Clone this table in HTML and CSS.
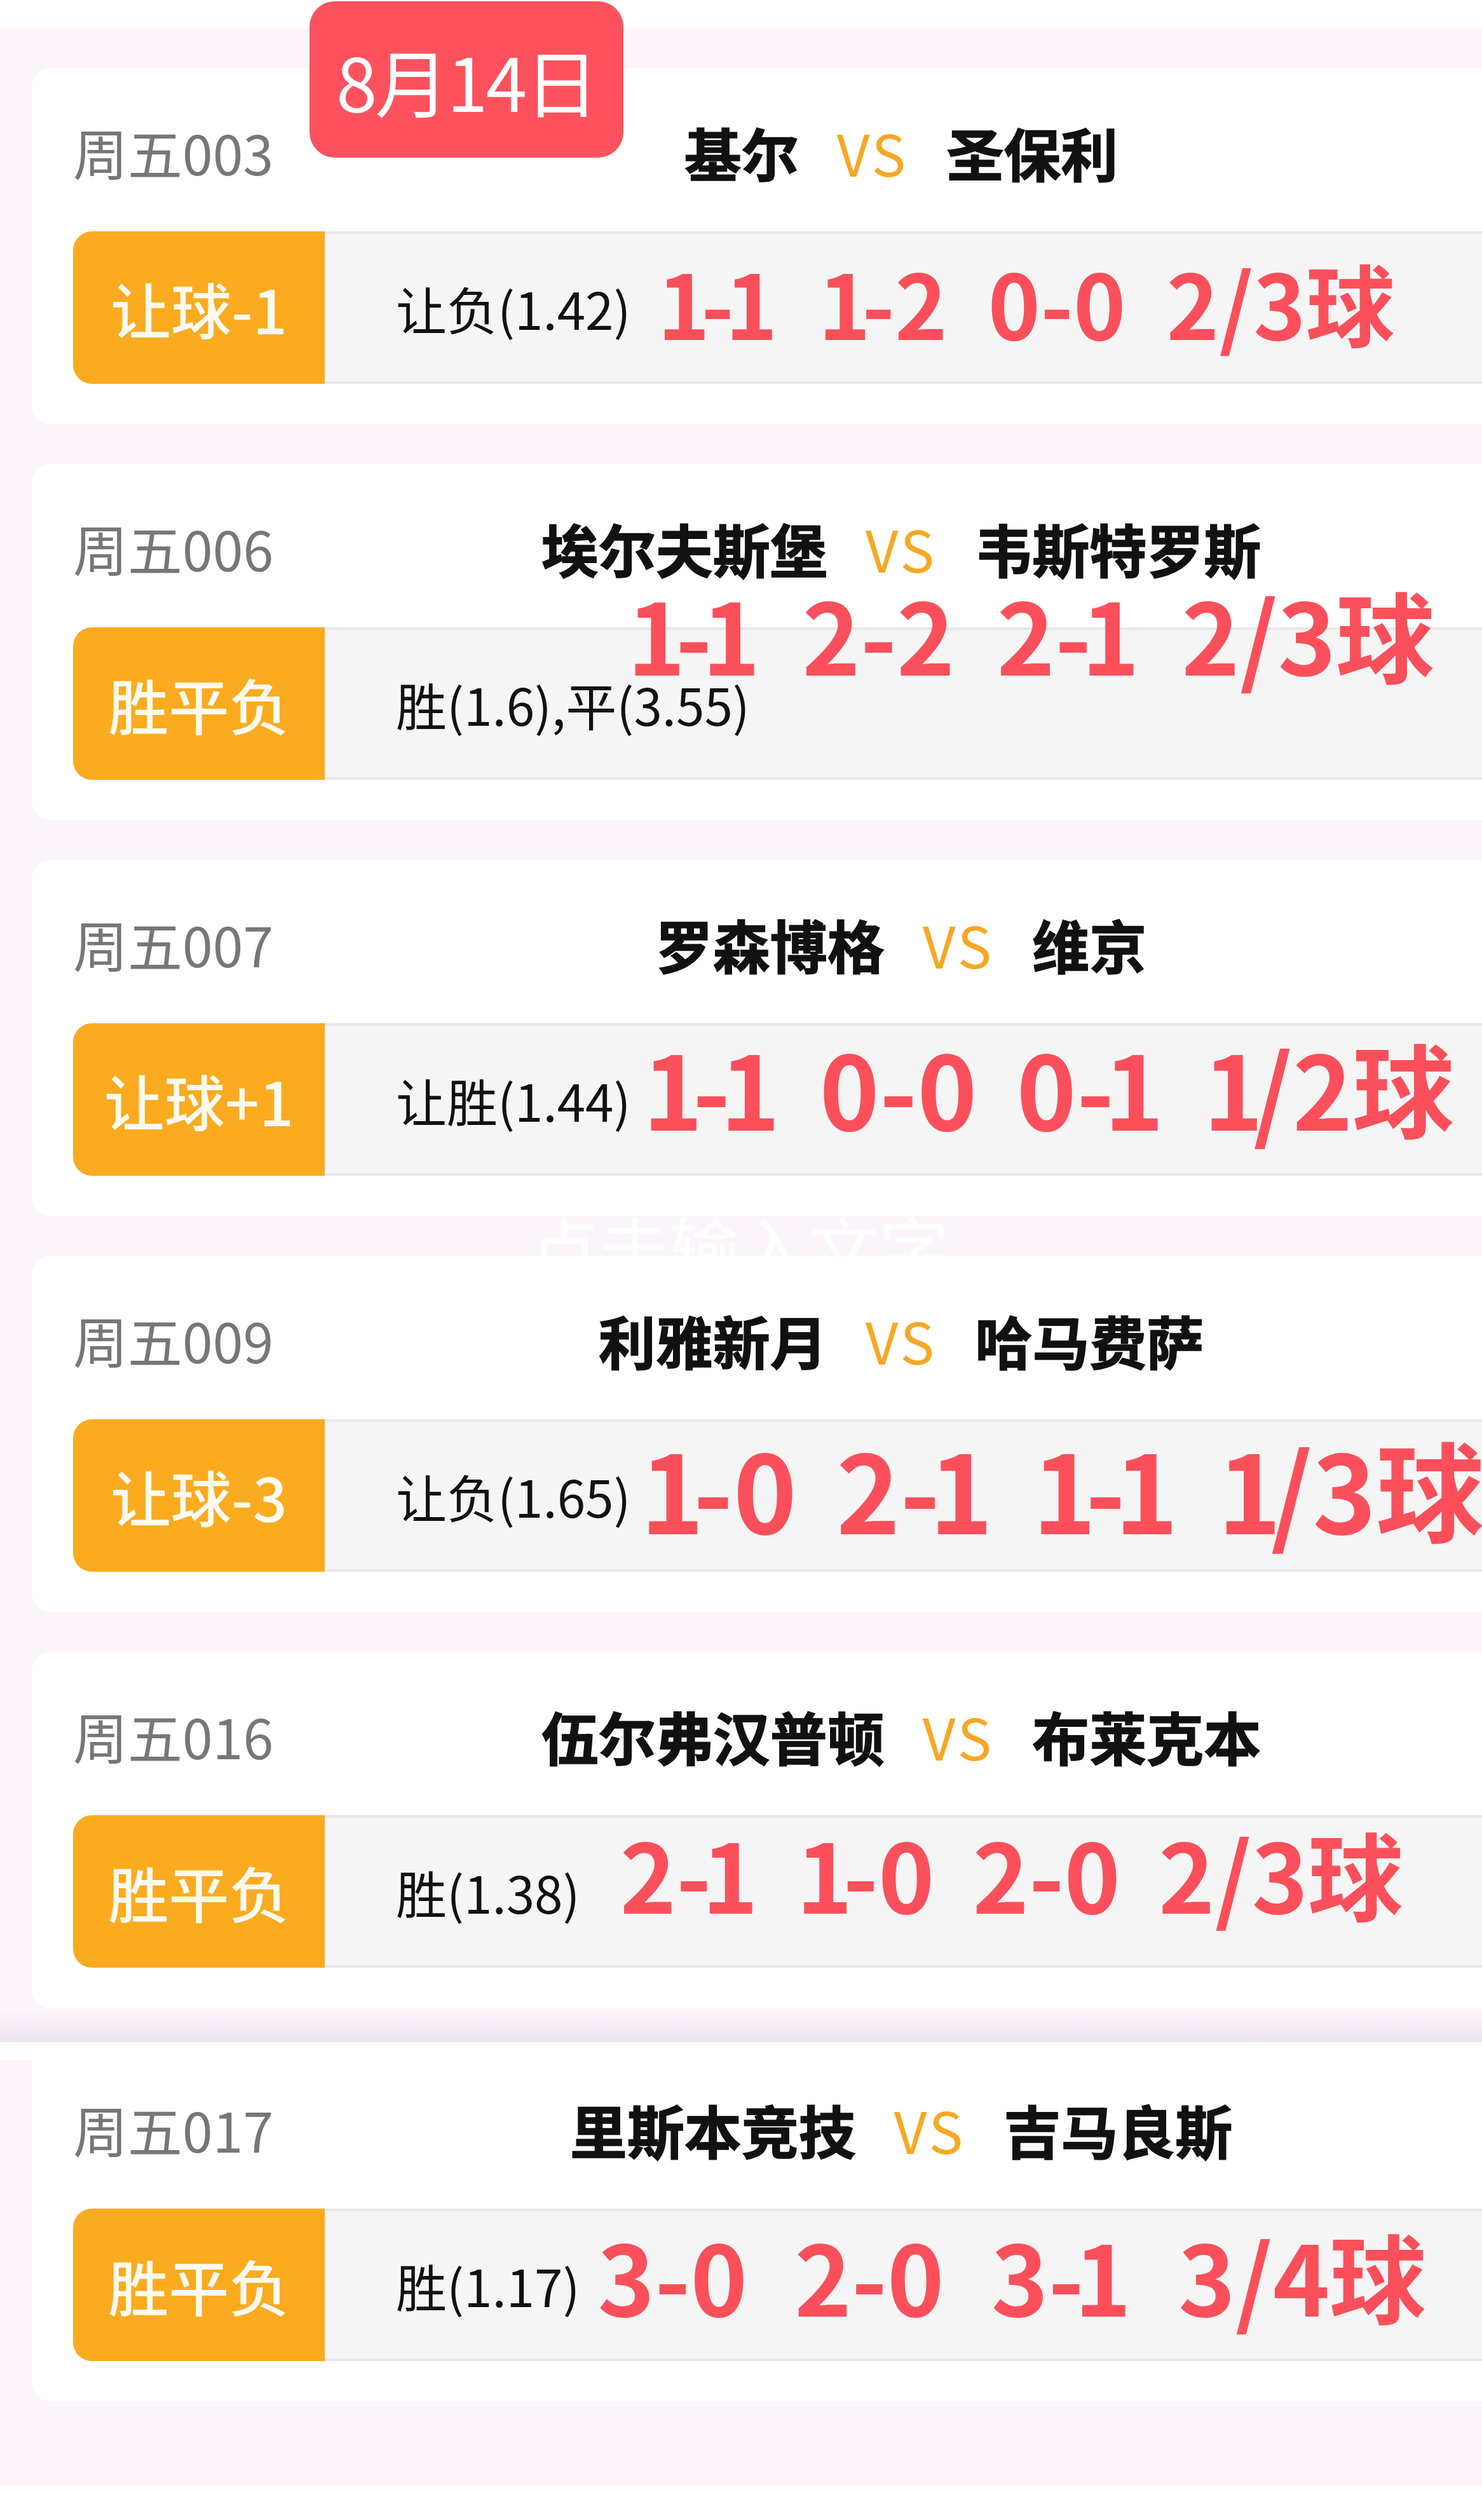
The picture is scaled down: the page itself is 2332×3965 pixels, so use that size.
FILE: index.html
```html
<!DOCTYPE html>
<html lang="zh-CN">
<head>
  <meta charset="UTF-8">
  <title>8月14日 比分推荐</title>
  <link rel="stylesheet" href="styles.css">
</head>
<body>

<div class="date-badge">8月14日</div>
<div class="ghost-text">点击输入文字</div>

<div class="sheet">
  <!-- 周五003 -->
  <div class="card">
    <div class="head">
      <span class="num">周五003</span>
      <div class="teams">
        <span class="team">基尔</span>
        <span class="vs">VS</span>
        <span class="team">圣保利</span>
      </div>
    </div>
    <div class="row">
      <div class="tag">让球-1</div>
      <div class="bar">
        <span class="odds">让负(1.42)</span>
        <div class="scores k1">
          <span><span class="lead">1</span>-<span class="tail">1</span></span>
          <span><span class="lead">1</span>-2</span>
          <span>0-0</span>
          <span>2/3球</span>
        </div>
      </div>
    </div>
  </div>

  <!-- 周五006 -->
  <div class="card">
    <div class="head">
      <span class="num">周五006</span>
      <div class="teams">
        <span class="team">埃尔夫斯堡</span>
        <span class="vs">VS</span>
        <span class="team">韦斯特罗斯</span>
      </div>
    </div>
    <div class="row">
      <div class="tag">胜平负</div>
      <div class="bar">
        <span class="odds">胜(1.6),平(3.55)</span>
      </div>
      <div class="scores k2">
        <span><span class="lead">1</span>-<span class="tail">1</span></span>
        <span>2-2</span>
        <span>2-<span class="tail">1</span></span>
        <span>2/3球</span>
      </div>
    </div>
  </div>

  <!-- 周五007 -->
  <div class="card">
    <div class="head">
      <span class="num">周五007</span>
      <div class="teams">
        <span class="team">罗森博格</span>
        <span class="vs">VS</span>
        <span class="team">维京</span>
      </div>
    </div>
    <div class="row">
      <div class="tag">让球+1</div>
      <div class="bar">
        <span class="odds">让胜(1.44)</span>
        <div class="scores k3">
          <span><span class="lead">1</span>-<span class="tail">1</span></span>
          <span>0-0</span>
          <span>0-<span class="tail">1</span></span>
          <span><span class="lead">1</span>/2球</span>
        </div>
      </div>
    </div>
  </div>

  <!-- 周五009 -->
  <div class="card">
    <div class="head">
      <span class="num">周五009</span>
      <div class="teams">
        <span class="team">利雅新月</span>
        <span class="vs">VS</span>
        <span class="team">哈马费萨</span>
      </div>
    </div>
    <div class="row">
      <div class="tag">让球-3</div>
      <div class="bar">
        <span class="odds">让负(1.65)</span>
        <div class="scores k4">
          <span><span class="lead">1</span>-0</span>
          <span>2-<span class="tail">1</span></span>
          <span><span class="lead">1</span>-<span class="tail">1</span></span>
          <span><span class="lead">1</span>/3球</span>
        </div>
      </div>
    </div>
  </div>

  <!-- 周五016 -->
  <div class="card">
    <div class="head">
      <span class="num">周五016</span>
      <div class="teams">
        <span class="team">伍尔弗汉普顿</span>
        <span class="vs">VS</span>
        <span class="team">布莱克本</span>
      </div>
    </div>
    <div class="row">
      <div class="tag">胜平负</div>
      <div class="bar">
        <span class="odds">胜(1.38)</span>
        <div class="scores k5">
          <span>2-<span class="tail">1</span></span>
          <span><span class="lead">1</span>-0</span>
          <span>2-0</span>
          <span>2/3球</span>
        </div>
      </div>
    </div>
  </div>
</div>

<div class="seam"></div>

<div class="sheet lower">
  <!-- 周五017 -->
  <div class="card last">
    <div class="head">
      <span class="num">周五017</span>
      <div class="teams">
        <span class="team">里斯本竞技</span>
        <span class="vs">VS</span>
        <span class="team">吉马良斯</span>
      </div>
    </div>
    <div class="row">
      <div class="tag">胜平负</div>
      <div class="bar">
        <span class="odds">胜(1.17)</span>
        <div class="scores k6">
          <span>3-0</span>
          <span>2-0</span>
          <span>3-<span class="tail">1</span></span>
          <span>3/4球</span>
        </div>
      </div>
    </div>
  </div>
</div>

</body>
</html>
```

FILE: styles.css
```css
body {
  margin: 0;
  width: 2332px;
  overflow: hidden;
  position: relative;
  background: #fff;
  font-family: "Noto Sans CJK SC", "Noto Sans", sans-serif;
  color: #111;
}

.date-badge {
  position: absolute;
  left: 487px;
  top: 2px;
  width: 494px;
  height: 246px;
  z-index: 5;
  display: flex;
  align-items: center;
  justify-content: center;
  background: #fd525e;
  border-radius: 40px;
  color: #fff;
  font-size: 116px;
  line-height: 1;
  letter-spacing: -3px;
}

.ghost-text {
  position: absolute;
  left: 833px;
  top: 1905px;
  z-index: 0;
  color: #fff;
  font-size: 110px;
  line-height: 1;
}

.sheet {
  margin-top: 45px;
  padding: 62px 0 0 50px;
  display: flex;
  flex-direction: column;
  gap: 63px;
  background: #fcf6fc;
}

.sheet.lower {
  margin-top: 0;
  padding-top: 0;
  padding-bottom: 132px;
  background: linear-gradient(#fff 29px, #fcf6fc 29px);
}

.seam {
  height: 54px;
  background: linear-gradient(#fbf5fb, #eee5ee);
}

.card {
  position: relative;
  z-index: 1;
  width: 2736px;
  height: 560px;
  box-sizing: border-box;
  padding: 0 65px;
  background: #fff;
  border-radius: 30px;
}

.card.last {
  height: 565px;
  border-radius: 0 0 30px 30px;
}

.head {
  height: 257px;
  padding-top: 7px;
  box-sizing: border-box;
  display: grid;
  grid-template-columns: 1fr auto 1fr;
  align-items: center;
}

.card.last .head {
  height: 262px;
  padding-top: 12px;
}

.num {
  color: #777;
  font-size: 86px;
  line-height: 1;
}

.teams {
  display: flex;
  align-items: center;
  gap: 60px;
  font-size: 90px;
  line-height: 1;
}

.team {
  font-weight: 700;
  color: #111;
  -webkit-text-stroke: 1.5px #111;
}

.vs {
  color: #f7a823;
  letter-spacing: 4px;
}

.row {
  position: relative;
  display: flex;
  height: 240px;
}

.tag {
  flex: none;
  width: 396px;
  display: flex;
  align-items: center;
  justify-content: center;
  background: #fbab1f;
  border-radius: 30px 0 0 30px;
  color: #fffaf0;
  font-size: 95px;
  font-weight: 500;
  line-height: 1;
}

.bar {
  flex: 1;
  display: flex;
  align-items: center;
  padding-left: 112px;
  background: #f5f5f5;
  border-top: 4px solid #e8e8e8;
  border-bottom: 4px solid #e8e8e8;
}

.odds {
  font-size: 80px;
  line-height: 1;
  color: #111;
  white-space: nowrap;
}

.scores {
  display: flex;
  font-weight: 700;
  color: #fb505b;
  line-height: 1;
  white-space: nowrap;
}

/* the "1" is set too loose in this font: pull in its inner side */
.lead { margin-right: -0.1em; }
.tail { margin-left: -0.1em; }

.k1 { font-size: 140px; margin-left: 42px; margin-bottom: 20px; gap: 64px; }
.k3 { font-size: 160px; margin-left: 19px; margin-bottom: 42px; gap: 62px; }
.k4 { font-size: 170px; margin-left: 15px; margin-bottom: 26px; gap: 62px; }
.k5 { font-size: 150px; margin-left: 63px; margin-bottom: 60px; gap: 60px; }
.k6 { font-size: 152px; margin-left: 28px; margin-bottom: 32px; gap: 74px; }

.k2 {
  position: absolute;
  left: 872px;
  top: -69px;
  font-size: 155px;
  gap: 66px;
}
```
